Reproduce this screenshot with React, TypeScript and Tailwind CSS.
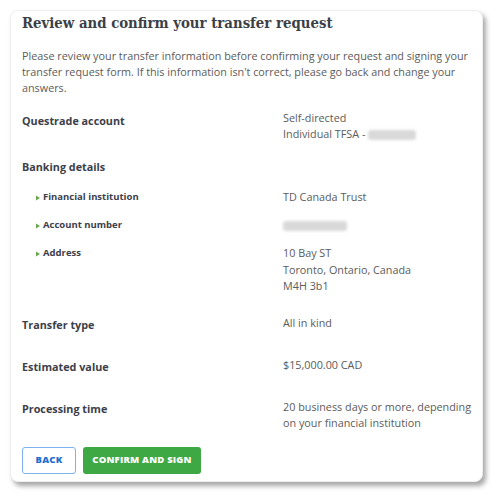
import React from "react";

const Arrow = () => (
  <svg width="4" height="6" viewBox="0 0 4 6" className="mr-[3px] shrink-0">
    <path d="M0 0.5 L4 3 L0 5.5 Z" fill="#6aa84f" />
  </svg>
);

const Blur = ({ w }: { w: number }) => (
  <span
    className="inline-block h-[10px] rounded-[3px] bg-[#d9d9d9] blur-[1.5px] align-middle"
    style={{ width: w }}
  />
);

const labelCls = "w-[261px] shrink-0 text-[10.8px] leading-[16px] font-bold text-[#3c404a]";
const valCls = "whitespace-nowrap text-[10.8px] leading-[16px] text-[#5b5b5b]";
const subCls = "w-[261px] shrink-0 pl-[14px] flex items-center h-[16px] text-[9.5px] font-bold text-[#3c404a]";

export default function App() {
  return (
    <div className="w-[500px] h-[498px] bg-white pt-[10px] pl-[10px]" style={{ fontFamily: '"Open Sans", sans-serif' }}>
      <div className="w-[473px] h-[472px] rounded-[8px] bg-white shadow-[3px_4px_5px_rgba(0,0,0,0.35)] border border-[#efefef] pl-[11px] pr-[3px]">
        <h1
          className="text-[14.8px] leading-[24px] font-bold text-[#3c3f46]"
          style={{ fontFamily: '"DejaVu Serif Condensed", "DejaVu Serif", serif', fontStretch: "semi-condensed" }}
        >
          Review and confirm your transfer request
        </h1>
        <p className="mt-[13px] text-[10.8px] leading-[16px] text-[#5b5b5b]">
          Please review your transfer information before confirming your request and signing your transfer request form. If this information isn't correct, please go back and change your answers.
        </p>

        <div className="mt-[14px] flex">
          <div className={labelCls + " pt-[3px]"}>Questrade account</div>
          <div className={valCls}>
            <div>Self-directed</div>
            <div>
              Individual TFSA - <Blur w={48} />
            </div>
          </div>
        </div>

        <div className="mt-[17px] text-[10.8px] leading-[16px] font-bold text-[#3c404a]">Banking details</div>

        <div className="mt-[14px] flex">
          <div className={subCls + " pt-[1px]"}>
            <Arrow />
            Financial institution
          </div>
          <div className={valCls}>TD Canada Trust</div>
        </div>

        <div className="mt-[12px] flex">
          <div className={subCls + " pt-[1px]"}>
            <Arrow />
            Account number
          </div>
          <div className={valCls}>
            <Blur w={64} />
          </div>
        </div>

        <div className="mt-[12px] flex">
          <div className={subCls + " pt-[1px]"}>
            <Arrow />
            Address
          </div>
          <div className="whitespace-nowrap text-[10.8px] leading-[16.5px] text-[#5b5b5b]">
            <div>10 Bay ST</div>
            <div>Toronto, Ontario, Canada</div>
            <div>M4H 3b1</div>
          </div>
        </div>

        <div className="mt-[20px] flex">
          <div className={labelCls + " pt-[2px]"}>Transfer type</div>
          <div className={valCls}>All in kind</div>
        </div>

        <div className="mt-[24px] flex">
          <div className={labelCls + " pt-[2px]"}>Estimated value</div>
          <div className={valCls}>$15,000.00 CAD</div>
        </div>

        <div className="mt-[24px] flex">
          <div className={labelCls + " pt-[2px]"}>Processing time</div>
          <div className={valCls}>
            <div>20 business days or more, depending</div>
            <div>on your financial institution</div>
          </div>
        </div>

        <div className="mt-[16px] flex gap-[7px]">
          <button className="h-[27px] w-[54px] rounded-[3px] border border-[#7eb2ee] bg-white text-[9.5px] font-extrabold tracking-[0.2px] text-[#1f6fd0]">
            BACK
          </button>
          <button className="h-[27px] w-[118px] rounded-[3px] bg-[#3ea845] text-[9.5px] font-extrabold tracking-[0.2px] text-white">
            CONFIRM AND SIGN
          </button>
        </div>
      </div>
    </div>
  );
}
